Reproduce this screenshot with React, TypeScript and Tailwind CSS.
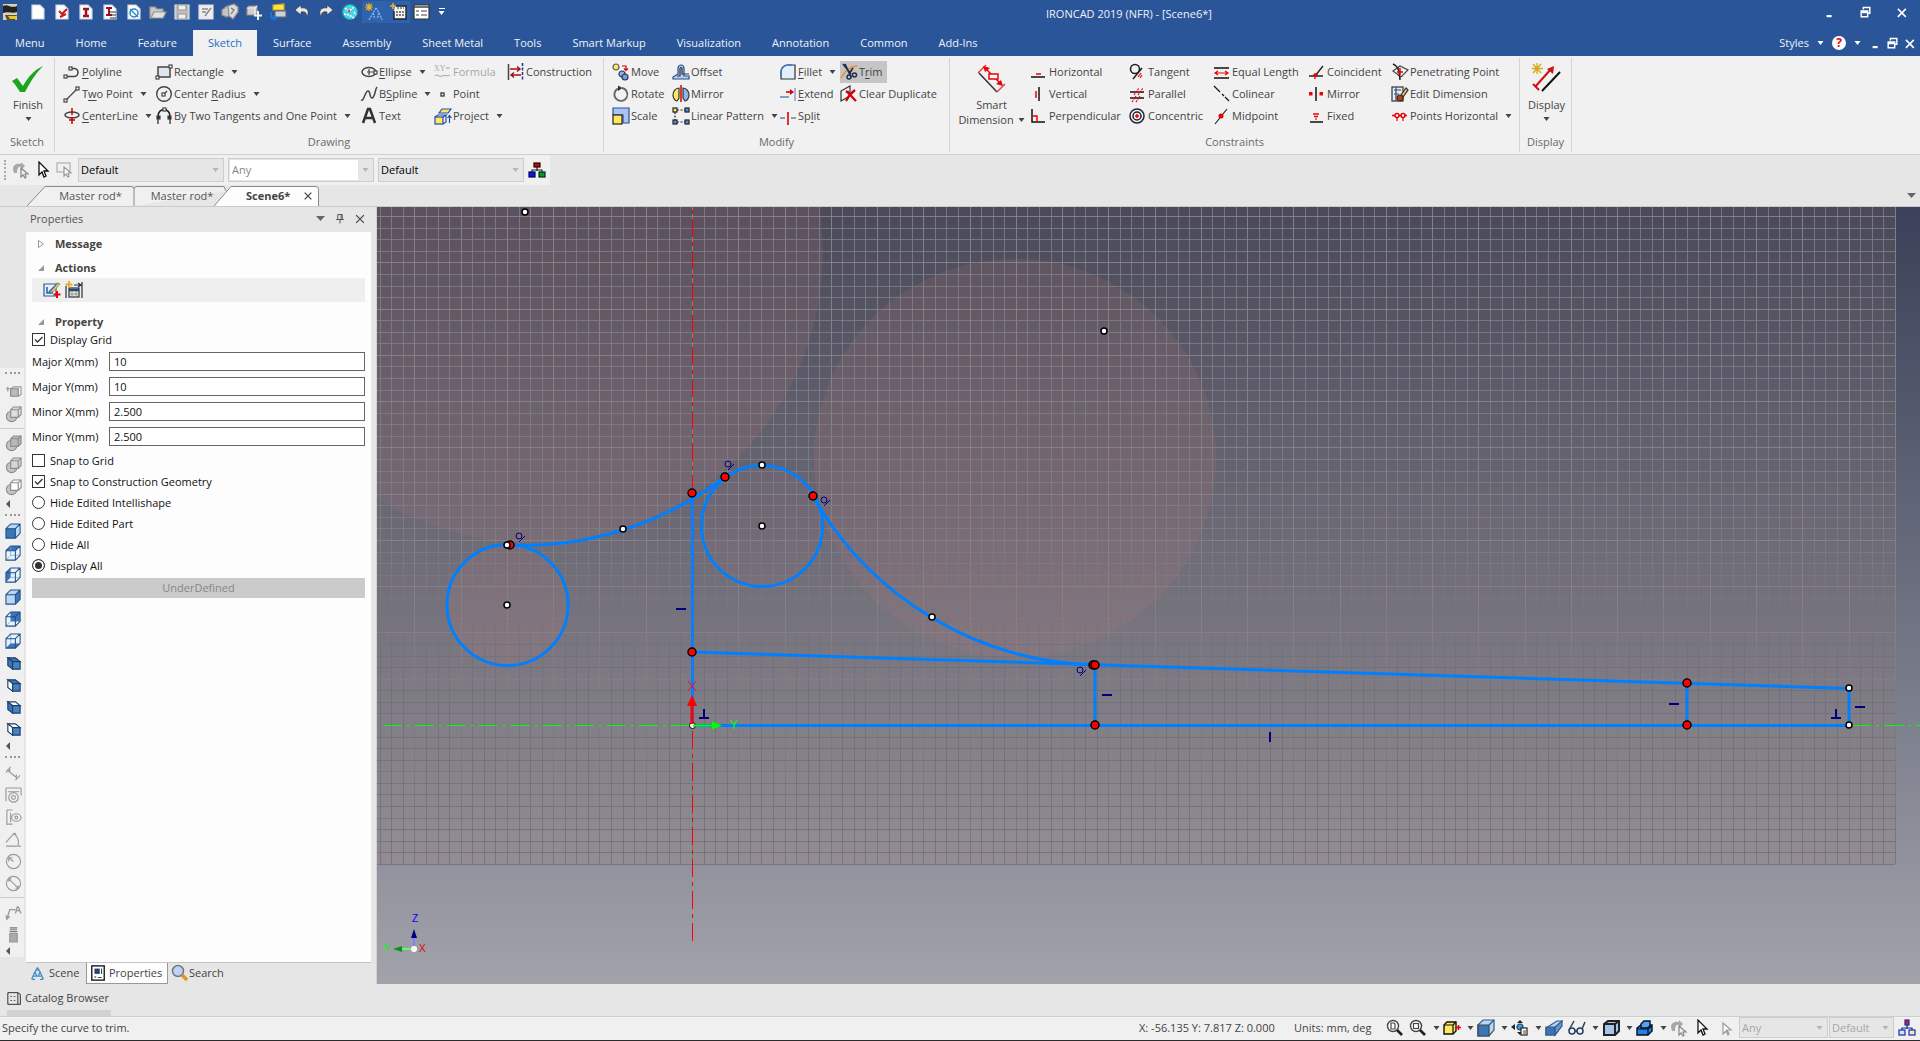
import { ReactNode, useState } from 'react';
import clsx from 'clsx';

const NAVY = '#00007f';
const BLUE = '#0080ff';
const RED = '#e00000';

type IconProps = { size?: number; children: ReactNode };

function Icon({ size = 18, children }: IconProps) {
  return (
    <svg width={size} height={size} viewBox="0 0 18 18" fill="none" stroke="#444" strokeWidth="1.2" className="shrink-0" aria-hidden="true">
      {children}
    </svg>
  );
}

function Caret({ className = 'text-[#444]' }: { className?: string }) {
  return (
    <svg width="7" height="4" viewBox="0 0 7 4" className={clsx('shrink-0', className)} aria-hidden="true">
      <path d="M0.500 0h6L3.500 4z" fill="currentColor" />
    </svg>
  );
}

// "&" marks the access key, as in a resource file
function Label({ text }: { text: string }) {
  const at = text.indexOf('&');
  if (at < 0) return <>{text}</>;
  return (
    <>
      {text.slice(0, at)}
      <span className="underline underline-offset-2">{text[at + 1]}</span>
      {text.slice(at + 2)}
    </>
  );
}

const icons: Record<string, ReactNode> = {
  polyline: <><path d="M4 13.500h7a4 4 0 0 0 0-8H8" strokeWidth="1.600" /><rect x="1" y="12" width="3" height="3" fill="#fff" /><rect x="6" y="4" width="3" height="3" fill="#fff" /></>,
  twoPoint: <><path d="M3 15L14 4" /><rect x="1" y="14" width="3" height="3" fill="#fff" /><rect x="13" y="2" width="3" height="3" fill="#fff" /></>,
  centerLine: <><ellipse cx="9" cy="8" rx="7" ry="3" strokeWidth="1.600" /><path d="M9 1v7M9 10v7M6 13h6" stroke="#c00" strokeWidth="1.500" /></>,
  rectangle: <><rect x="3" y="4" width="12" height="10" fill="#dfe6ef" strokeWidth="1.500" /><rect x="1" y="13" width="3" height="3" fill="#fff" /><rect x="14" y="2" width="3" height="3" fill="#fff" /></>,
  centerRadius: <><circle cx="9" cy="9" r="7.300" strokeWidth="1.400" /><path d="M8 10l4-4" /><rect x="7" y="8" width="3" height="3" fill="#fff" /></>,
  twoTangents: <><path d="M3 11V9a5.500 6 0 0 1 12 0v2" strokeWidth="1.500" stroke="#222" /><path d="M3 9v8M15 9v8" stroke="#222" /><rect x="2" y="9" width="3" height="3" fill="#222" /><rect x="13" y="9" width="3" height="3" fill="#222" /><rect x="8" y="1" width="3" height="3" fill="#fff" /></>,
  ellipse: <><ellipse cx="9" cy="9" rx="7" ry="4.500" strokeWidth="1.500" /><path d="M9 6v6M7 9h8" /><rect x="14" y="8" width="3" height="3" fill="#fff" /></>,
  bspline: <path d="M1 15c3 2 4-9 7-9s1 7 4 7 3-9 5-11" strokeWidth="1.500" />,
  text: <path d="M3 16L8 2h2l5 14M5 11h8" stroke="#333" strokeWidth="2.500" />,
  formula: <><text x="0" y="8" fontSize="8" fill="#aaa" stroke="none" fontFamily="Liberation Serif">XY=</text><path d="M1 13c3-3 4 2 7 0s4 1 8-1" stroke="#b5b5b5" /></>,
  point: <rect x="7" y="8" width="3" height="3" fill="#fff" strokeWidth="1.400" />,
  project: <><path d="M5 6l3-4h9l-3 4z" fill="#ffe860" stroke="#1f4fb0" /><rect x="1" y="10" width="8" height="7" fill="#ffe860" stroke="#1f4fb0" /><path d="M1 10l3-2h8l-3 2M12 8v7l-3 2" stroke="#1f4fb0" /><path d="M15.500 16V9M13.500 11l2-2.500 2 2.500" stroke="#1f4fb0" /></>,
  construction: <><path d="M1.500 1v16" strokeWidth="1.500" /><path d="M15.500 0v17" stroke="#2030a0" strokeDasharray="3 1.500" strokeWidth="1.500" /><path d="M3 6h10M10 3.500L13 6l-3 2.500M14 12H4M7 9.500L4 12l3 2.500" stroke="#a01010" strokeWidth="1.400" /></>,
  move: <><circle cx="4" cy="4" r="3" fill="#ffe860" stroke="#555" /><circle cx="10" cy="11" r="3" fill="#8fb4e8" stroke="#335" /><circle cx="13" cy="14" r="3" fill="#6f9de0" stroke="#335" /><path d="M10 3h4v4M12 5.500l2 2 2-2" stroke="#c00" /></>,
  rotate: <><path d="M10 3a6.500 6.500 0 1 1-4 .6" strokeWidth="1.800" stroke="#666" /><path d="M6 0.500l4.500 2.500L6 6z" fill="#333" stroke="none" /></>,
  scale: <><path d="M1 1h16v15H11V8H1z" fill="#a9c4f0" stroke="#2b50a8" /><rect x="1" y="8" width="9" height="9" fill="#ffe860" stroke="#222" /></>,
  offset: <><path d="M1 16h16v-3h-5V5a3 3 0 0 0-6 0v6L1 14z" fill="#b6cdec" stroke="#234f92" /><path d="M5 13h3V5.500a1 1 0 0 1 2 0V11h7" stroke="#333" /></>,
  mirror: <><path d="M7 3C3 3 1 7 1 10s2 6 4 6l2-3z" fill="#ffe860" stroke="#333" /><path d="M11 3c4 0 6 4 6 7s-2 6-4 6l-2-3z" fill="#8fb4e8" stroke="#333" /><path d="M9 0v17" stroke="#c00" strokeWidth="1.500" /></>,
  linearPattern: <><path d="M5 3h9M3 5v9M5 15h9" stroke="#222" strokeDasharray="2 1.500" /><rect x="1" y="1" width="4" height="4" fill="#ffe860" stroke="#222" /><rect x="13" y="1" width="4" height="4" fill="#5a8fd8" stroke="#222" /><rect x="1" y="13" width="4" height="4" fill="#5a8fd8" stroke="#222" /><rect x="13" y="13" width="4" height="4" fill="#5a8fd8" stroke="#222" /></>,
  fillet: <><path d="M16 2v14H2V9c0-4 3-7 7-7z" fill="#e4eefb" stroke="#333" /><path d="M2 13V9c0-4 3-7 7-7h4" stroke="#3f78c8" strokeWidth="1.500" /></>,
  extend: <><path d="M1 12h9" stroke="#5a86b8" strokeWidth="1.500" /><path d="M7 7h6" stroke="#d00" strokeWidth="1.600" /><path d="M11 4l4 3-4 3z" fill="#d00" stroke="none" /><path d="M16 3v13" stroke="#8a9be0" strokeWidth="1.500" /></>,
  split: <><path d="M1 11h5M12 11h5" stroke="#5a86b8" strokeWidth="1.500" /><path d="M9 5v13" stroke="#d00" strokeWidth="1.600" /></>,
  trim: <><path d="M1 15C5 8 10 3 17 3" stroke="#f08a28" strokeWidth="1.500" /><path d="M3 1l8 10M5 1l6 13M13 5l-4 6" stroke="#1f2e4a" strokeWidth="1.700" /><circle cx="9" cy="14" r="2" stroke="#1f2e4a" strokeWidth="1.500" /><circle cx="14.500" cy="12" r="2" stroke="#1f2e4a" strokeWidth="1.500" /></>,
  clearDup: <><path d="M1 6l9-5v10l-9 5zM8 6l2 5" stroke="#333" /><path d="M6 6c3 2 7 7 10 10M15 5c-4 3-7 7-9 11" stroke="#d40000" strokeWidth="2.200" /></>,
  horizontal: <><path d="M1 14h14" stroke="#111" strokeWidth="1.500" /><path d="M6 11h5" stroke="#e00" strokeWidth="1.500" /></>,
  vertical: <><path d="M9 2v14" stroke="#111" strokeWidth="1.500" /><path d="M6 6v7" stroke="#e00" strokeWidth="1.500" /></>,
  perpendicular: <><path d="M2 2v13h13" stroke="#111" strokeWidth="1.500" /><path d="M2 9h5v6" stroke="#e00" strokeWidth="1.500" /></>,
  tangent: <><circle cx="6" cy="6" r="4.500" stroke="#222" strokeWidth="1.600" /><path d="M4 16L13 5" stroke="#222" strokeWidth="1.500" /><path d="M9 14l3-4M11 15l2-3" stroke="#e00" /></>,
  parallel: <><path d="M1 7h14M1 13h14" stroke="#111" strokeWidth="1.500" /><path d="M5 10l5-7M9 10l5-7M3 17l4-6M7 17l4-6" stroke="#e00" strokeDasharray="2 1" /></>,
  concentric: <><circle cx="8" cy="9" r="7" stroke="#223" strokeWidth="1.500" /><circle cx="8" cy="9" r="4" stroke="#223" strokeWidth="1.500" /><path d="M8 7v4M6 9h4" stroke="#e00" strokeWidth="1.500" /></>,
  equalLength: <><path d="M1 5h15M1 15h15" stroke="#111" strokeWidth="1.500" /><path d="M2 10h13M5 8l-3 2 3 2M12 8l3 2-3 2" stroke="#e00" /></>,
  colinear: <path d="M1 1l6 6M9 9l2 2M12 12l4 4" stroke="#111" strokeWidth="1.200" />,
  midpoint: <><path d="M2 17L14 2" stroke="#222" /><circle cx="8" cy="9" r="2.500" fill="#e00" stroke="none" /></>,
  coincident: <><path d="M1 13h14M7 13l8-10" stroke="#222" strokeWidth="1.400" /><path d="M7 10v6M5 12h5" stroke="#e00" strokeWidth="1.400" /></>,
  mirrorC: <><path d="M8 2v14" stroke="#111" strokeWidth="1.500" /><rect x="1" y="7" width="3.500" height="3.500" fill="#e00" stroke="none" /><rect x="11.500" y="7" width="3.500" height="3.500" fill="#e00" stroke="none" /></>,
  fixed: <><path d="M2 15h13" stroke="#111" strokeWidth="1.500" /><path d="M5 7h6M6 9.500h4M7.300 12h1.500" stroke="#e00" strokeWidth="1.400" /></>,
  penetrating: <><path d="M2 8l7-5 8 4-7 7z" stroke="#444" /><path d="M2 1c5 2 6 5 7 16" stroke="#222" strokeWidth="1.500" /><path d="M9 5v7M6 9h6" stroke="#e00" strokeWidth="1.500" /></>,
  editDim: <><rect x="1" y="2" width="11" height="14" fill="#e7edf2" stroke="#333" /><path d="M5 2v14M3 5h7M3 9h5" stroke="#2b4d77" /><path d="M10 10l5-7 2 2-5 7z" fill="#eec27a" stroke="#333" /><circle cx="9" cy="13" r="3" fill="#a8481c" stroke="#522" /></>,
  pointsHorizontal: <><path d="M1 8.500h15" stroke="#d00" strokeWidth="1.500" /><circle cx="6" cy="8.500" r="2" fill="#fff" stroke="#d00" strokeWidth="1.400" /><circle cx="12" cy="8.500" r="2" fill="#fff" stroke="#d00" strokeWidth="1.400" /><path d="M6 11v3M12 11v3" stroke="#d00" /></>,
};

type Cmd = { icon: string; label: string; menu?: boolean; disabled?: boolean; active?: boolean };

function Command({ icon, label, menu, disabled, active }: Cmd) {
  return (
    <button
      disabled={disabled}
      className={clsx(
        'flex h-[22px] items-center gap-px whitespace-nowrap pr-1',
        active && 'bg-[#c5c5c5]',
        disabled ? 'text-[#a8a8a8]' : 'text-[#444]',
      )}
    >
      <Icon>{icons[icon]}</Icon>
      <span><Label text={label} /></span>
      {menu && <span className="pl-1.5"><Caret /></span>}
    </button>
  );
}

function Group({ title, className, children }: { title: string; className: string; children: ReactNode }) {
  return (
    <section className={clsx('my-0.5 flex shrink-0 flex-col border-r border-[#d4d4d4]', className)}>
      <div className="flex h-[74px] items-start pt-[3px]">{children}</div>
      <h2 className="text-center leading-5 text-[#6a6a6a]">{title}</h2>
    </section>
  );
}

const drawing: Cmd[][] = [
  [{ icon: 'polyline', label: '&Polyline' }, { icon: 'twoPoint', label: 'T&wo Point', menu: true }, { icon: 'centerLine', label: '&CenterLine', menu: true }],
  [{ icon: 'rectangle', label: 'Rectangle', menu: true }, { icon: 'centerRadius', label: 'Center &Radius', menu: true }, { icon: 'twoTangents', label: 'By Two Tangents and One Point', menu: true }],
  [{ icon: 'ellipse', label: '&Ellipse', menu: true }, { icon: 'bspline', label: 'B&Spline', menu: true }, { icon: 'text', label: 'Text' }],
  [{ icon: 'formula', label: 'Formula', disabled: true }, { icon: 'point', label: 'Point' }, { icon: 'project', label: 'Project', menu: true }],
  [{ icon: 'construction', label: 'Construction' }],
];

const modify: Cmd[][] = [
  [{ icon: 'move', label: 'Move' }, { icon: 'rotate', label: 'Rotate' }, { icon: 'scale', label: 'Scale' }],
  [{ icon: 'offset', label: 'Offset' }, { icon: 'mirror', label: 'Mirror' }, { icon: 'linearPattern', label: 'Linear Pattern', menu: true }],
  [{ icon: 'fillet', label: '&Fillet', menu: true }, { icon: 'extend', label: '&Extend' }, { icon: 'split', label: 'Sp&lit' }],
  [{ icon: 'trim', label: 'T&rim', active: true }, { icon: 'clearDup', label: 'Clear Duplicate' }],
];

const constraints: Cmd[][] = [
  [{ icon: 'horizontal', label: 'Horizontal' }, { icon: 'vertical', label: 'Vertical' }, { icon: 'perpendicular', label: 'Perpendicular' }],
  [{ icon: 'tangent', label: 'Tangent' }, { icon: 'parallel', label: 'Parallel' }, { icon: 'concentric', label: 'Concentric' }],
  [{ icon: 'equalLength', label: 'Equal Length' }, { icon: 'colinear', label: 'Colinear' }, { icon: 'midpoint', label: 'Midpoint' }],
  [{ icon: 'coincident', label: 'Coincident' }, { icon: 'mirrorC', label: 'Mirror' }, { icon: 'fixed', label: 'Fixed' }],
  [{ icon: 'penetrating', label: 'Penetrating Point' }, { icon: 'editDim', label: 'Edit Dimension' }, { icon: 'pointsHorizontal', label: 'Points Horizontal', menu: true }],
];

function Columns({ cols, className }: { cols: Cmd[][]; className: string }) {
  return (
    <div className={clsx('grid', className)}>
      {cols.map((col, i) => (
        <div key={i} className="flex flex-col items-start">
          {col.map((c) => <Command key={c.label} {...c} />)}
        </div>
      ))}
    </div>
  );
}

const sheet = <path d="M3 2h8l4 4v10H3z" fill="#fff" stroke="#cfd6e4" />;

const quickAccess: ReactNode[] = [
  sheet,
  <>{sheet}<path d="M6 8l3 3 5-5M7 14l6-3" stroke="#d01818" strokeWidth="2" /></>,
  <>{sheet}<path d="M6 6h6M6 13h6M9 6v7" stroke="#a01020" strokeWidth="2.500" /></>,
  <>{sheet}<path d="M5 5h6M5 12h6M8 5v7" stroke="#a01020" strokeWidth="2" /><path d="M9 9h6M9 12h6M9 15h6" stroke="#333" /></>,
  <>{sheet}<circle cx="9" cy="10" r="4" stroke="#1e88c8" strokeWidth="1.500" /><path d="M5 6l8 8" stroke="#1e88c8" /></>,
  <><path d="M1 4h5l2 2h6v3H5l-3 6H1z" fill="#c9c9c9" stroke="#999" /><path d="M5 9h12l-3 6H2z" fill="#e2e2e2" stroke="#999" /></>,
  <><path d="M2 2h14v14H2z" fill="#bdbdbd" stroke="#ddd" /><path d="M5 2h8v5H5zM5 11h8v5H5z" fill="#eee" stroke="#999" /></>,
  <><path d="M2 2h14v14H2z" fill="#ededed" stroke="#ddd" /><path d="M5 6h6M5 9h4M8 13l6-8" stroke="#888" strokeWidth="1.500" /></>,
  <><path d="M1 7l5-4 4 2v6l-4 3-5-2z" fill="#c4c4c4" stroke="#8e8e8e" /><path d="M7 3l6-2 4 3v5l-5 7-4-3z" fill="#dadada" stroke="#8e8e8e" /><path d="M10 5l3 2-3 4" stroke="#777" /></>,
  <><path d="M2 5l2-2h8v7l-2 2H2z" fill="#cfcfcf" stroke="#8e8e8e" /><path d="M2 5h8v7M10 5l2-2" stroke="#eee" /><path d="M13 8v9M9 12.500h8" stroke="#f4f4f4" strokeWidth="2" /></>,
  <><path d="M4 2l11-1v6H4z" fill="#ffe14a" stroke="#c8a818" /><path d="M6 8h11v6H6z" fill="#c8d3e0" stroke="#667" /><path d="M2 9v6h4M4 13l3 2-3 2" stroke="#1a72d8" strokeWidth="2" /></>,
  <path d="M8 2L2 7l6 5V9c4-1 6 1 6 5 3-6 0-10-6-9z" fill="#e8e8e8" stroke="#333" strokeWidth=".6" />,
  <path d="M10 2l6 5-6 5V9C6 8 4 10 4 14c-3-6 0-10 6-9z" fill="#e8e8e8" stroke="#333" strokeWidth=".6" />,
  <><circle cx="9" cy="9" r="7.500" fill="#48d4e4" stroke="#1e98b0" /><path d="M4 5l4 3 5-4M3 11l5 1 5 3M13 9l2 3" stroke="#fff" strokeWidth="1.500" strokeDasharray="2 1" /><circle cx="8" cy="8" r="1.200" fill="#e04040" stroke="none" /></>,
  <><path d="M4 0v8M0 4h8M1 1l6 6M7 1L1 7" stroke="#f0b429" /><path d="M11 5l3 5M11 5l-3 5M8 10l-4 7M14 10l3 7M8 10l2 6M14 10l-2 6" stroke="#77b0e8" strokeWidth="1.500" strokeDasharray="2 1" /></>,
  <><path d="M6 3h11v13H5V8" fill="#f4f4f4" stroke="#222" strokeWidth="1.400" /><path d="M8 8v6M11 8v6M14 8v6M8 5h7" stroke="#333" strokeDasharray="2 1" /><path d="M4 0v6M1 3h6" stroke="#f0b429" strokeWidth="1.500" /></>,
  <><path d="M1 2h15v14H1z" fill="#fff" stroke="#333" /><path d="M1 4h15" strokeWidth="1.500" /><path d="M3 8h3M3 12h3M8 8h6M8 12h6" strokeWidth="1.200" /></>,
];

function WindowButtons() {
  return (
    <>
      <button aria-label="Minimize"><Icon size={13}><path d="M5 14h7" stroke="#fff" strokeWidth="3" /></Icon></button>
      <button aria-label="Restore"><Icon size={13}><path d="M6 5V2h9v8h-3M3 7h9v8H3zM3 9h9" stroke="#fff" strokeWidth="2" /></Icon></button>
      <button aria-label="Close"><Icon size={13}><path d="M4 4l11 11M15 4L4 15" stroke="#fff" strokeWidth="2.200" /></Icon></button>
    </>
  );
}

const ribbonTabs = ['Menu', 'Home', 'Feature', 'Sketch', 'Surface', 'Assembly', 'Sheet Metal', 'Tools', 'Smart Markup', 'Visualization', 'Annotation', 'Common', 'Add-Ins'];

function TitleBar() {
  return (
    <header className="bg-[#2a5699] text-white">
      <div className="relative flex h-[30px] items-start justify-between">
        <div className="flex h-[23px] items-center">
          <button aria-label="IRONCAD" className="mr-1.5 pl-0.5">
            <Icon>
              <rect x="1" y="1" width="14" height="16" fill="#d9d2b4" stroke="none" />
              <path d="M1 3c5-3 7 3 14 0v6c-4 2-9-1-14 1z" fill="#222" stroke="none" />
              <path d="M3 12h12l-2 5H5z" fill="#5a5030" stroke="none" />
              <path d="M6 13h9v3H8z" fill="#e8c628" stroke="none" />
            </Icon>
          </button>
          {quickAccess.map((q, i) => (
            <button key={i} aria-label={`Quick access ${i + 1}`} className={clsx('flex w-6 justify-center py-0.5', (i === 14 || i === 15) && 'bg-[#2f62ad]')}>
              <Icon>{q}</Icon>
            </button>
          ))}
          <button aria-label="Customize toolbar" className="ml-1 flex flex-col items-center gap-0.5">
            <span className="h-px w-1.5 bg-white" />
            <Caret className="text-white" />
          </button>
        </div>
        <h1 className="absolute left-[1046px] top-1 leading-5 text-[#eef2f9]">IRONCAD 2019 (NFR) - [Scene6*]</h1>
        <div className="flex h-6 items-center gap-[23px] pr-3"><WindowButtons /></div>
      </div>
      <div className="flex h-[26px] items-stretch justify-between">
        <nav className="flex gap-px">
          {ribbonTabs.map((t) => (
            <button key={t} className={clsx('px-[15px]', t === 'Sketch' ? 'bg-[#f1f1f1] text-[#1e6fc4]' : 'text-[#eef2f9]')}>{t}</button>
          ))}
        </nav>
        <div className="flex items-center gap-2 pr-1">
          <button className="flex items-center gap-2 text-[#eef2f9]">Styles <Caret className="text-white" /></button>
          <button aria-label="Help" className="flex items-center gap-2">
            <span className="flex h-3.5 w-3.5 items-center justify-center rounded-full bg-white text-xs font-bold text-red-600">?</span>
            <Caret className="text-white" />
          </button>
          <div className="flex items-center gap-1"><WindowButtons /></div>
        </div>
      </div>
    </header>
  );
}

function Ribbon() {
  return (
    <div className="flex h-[99px] overflow-hidden border-b border-[#cfcfcf] bg-[#f1f1f1]">
      <Group title="Sketch" className="w-[55px]">
        <button className="flex w-full flex-col items-center pl-0.5 text-[#444]">
          <svg width="34" height="32" viewBox="0 -3 34 32" aria-hidden="true"><path d="M1 17l5-3 6 8C17 13 23 6 32 2 24 10 18 20 14 28h-5C7 25 5 21 1 17z" fill="#1ea51e" /></svg>
          <span className="pt-1 leading-4">Finish</span>
          <span className="pt-1"><Caret /></span>
        </button>
      </Group>
      <Group title="Drawing" className="w-[549px]">
        <Columns cols={drawing} className="grid-cols-[92px_205px_74px_73px_95px] pl-2" />
      </Group>
      <Group title="Modify" className="w-[346px]">
        <Columns cols={modify} className="grid-cols-[60px_107px_61px_106px] pl-2" />
      </Group>
      <Group title="Constraints" className="w-[570px]">
        <button className="flex w-20 flex-col items-center pl-[3px] text-[#444]">
          <svg width="36" height="32" viewBox="-1 -3 36 32" fill="none" aria-hidden="true">
            <path d="M4 9l18 19" stroke="#333" strokeWidth="1.500" />
            <path d="M3 9l8-8M22 28l8-8" stroke="#e04848" strokeWidth="1.500" />
            <path d="M9 3l18 18" stroke="#e00" strokeWidth="1.500" />
            <path d="M8 2l7 2-5 4zM28 22l-7-2 5-4z" fill="#e00" />
            <rect x="14" y="10" width="9" height="5" fill="#fff" stroke="#e00" strokeWidth="1.500" />
          </svg>
          <span className="whitespace-nowrap pt-1 leading-[15px]">Smart</span>
          <span className="flex items-center gap-1 leading-[15px]">Dimension <Caret /></span>
        </button>
        <Columns cols={constraints} className="grid-cols-[99px_84px_95px_83px_125px]" />
      </Group>
      <Group title="Display" className="w-[52px]">
        <button className="flex w-full flex-col items-center pl-0.5 text-[#444]">
          <svg width="34" height="32" viewBox="-1 -2 34 32" fill="none" aria-hidden="true">
            <path d="M6 0v11M1 5.500h11M2 1l8 9M10 1l-8 9" stroke="#d4a818" strokeWidth="1.300" />
            <path d="M4 24L20 6M2 21l6 6" stroke="#d01010" strokeWidth="2" />
            <path d="M23 3l-1 8-6-5z" fill="#d01010" />
            <path d="M11 28L29 9" stroke="#111" strokeWidth="2" />
          </svg>
          <span className="pt-1 leading-4">Display</span>
          <span className="pt-1"><Caret /></span>
        </button>
      </Group>
    </div>
  );
}

function Picker({ label, value, className, disabled }: { label: string; value: string; className: string; disabled?: boolean }) {
  return (
    <div className={clsx('relative flex items-center border border-[#cdcdcd] bg-[#e6e6e6]', className)}>
      <select aria-label={label} disabled={disabled} className={clsx('h-full w-full appearance-none px-0.5', disabled ? 'text-[#a6a6a6]' : 'text-black')}>
        <option>{value}</option>
      </select>
      <span className="pointer-events-none absolute right-1"><Caret className="text-[#b4b4b4]" /></span>
    </div>
  );
}

const cursor = <path d="M5 1v13l3-3 2 5 2-1-2-5h4z" fill="#fff" stroke="#111" strokeWidth="1.300" />;
const bentArrow = <><path d="M1 8c0-5 5-6 8-5V1l4 4-4 4V6C6 5 5 8 5 12H2z" fill="#a8a8a8" stroke="none" /><path d="M9 7v9l2-2 2 3 1-1-1-3h3z" fill="#eee" stroke="#888" /></>;
const boxCursor = <><rect x="1" y="2" width="13" height="9" stroke="#b0b0b0" /><path d="M8 6v9l2-2 2 3 1-1-1-3h3z" fill="#fff" stroke="#999" /></>;
const tree = <><path d="M9 6v4M4 12V9h10v3" stroke="#222" /><rect x="6" y="2" width="6" height="4" fill="#b01010" stroke="#300" /><rect x="1" y="11" width="6" height="5" fill="#1018d8" stroke="#006" /><rect x="11" y="11" width="6" height="5" fill="#109030" stroke="#030" /></>;
const paleTree = <><path d="M9 6v4M4 12V9h10v3" stroke="#14307a" /><rect x="7" y="1" width="4" height="5" fill="#d02020" stroke="#1a2ab0" /><rect x="1" y="11" width="6" height="5" fill="#cfe2ff" stroke="#1a2ab0" /><rect x="11" y="11" width="6" height="5" fill="#f4ecb8" stroke="#1a2ab0" /></>;

function SelectionBar() {
  return (
    <div className="flex h-[30px] w-[550px] items-center bg-[#f0f0f0] pl-1">
      <span className="h-5 w-2 border-l-2 border-dotted border-[#aaa]" />
      <button aria-label="Back"><Icon>{bentArrow}</Icon></button>
      <button aria-label="Select" className="pl-1"><Icon>{cursor}</Icon></button>
      <button aria-label="Box select" className="px-1"><Icon>{boxCursor}</Icon></button>
      <Picker label="Selection mode" value="Default" className="h-6 w-[146px]" />
      <div className="relative ml-1 flex h-6 w-[146px] items-center border border-[#cdcdcd] bg-[#e6e6e6] pl-px">
        <select aria-label="Filter" className="h-5 w-[128px] appearance-none bg-white px-0.5 text-[#888]"><option>Any</option></select>
        <span className="pointer-events-none absolute right-1"><Caret className="text-[#b4b4b4]" /></span>
      </div>
      <Picker label="Configuration" value="Default" className="ml-1 h-6 w-[146px]" />
      <button aria-label="Structure" className="pl-1"><Icon>{tree}</Icon></button>
    </div>
  );
}

function DocTabs() {
  return (
    <div className="flex h-[22px] items-end justify-between border-b border-[#cacaca]">
      <div className="flex h-5 pl-[27px]">
        <button className="relative h-5 w-[107px] pl-5 text-[#555]">
          <svg viewBox="0 0 107 20" className="absolute left-0 top-0 h-5 w-[107px]" fill="#f0f0f0" stroke="#8a8a8a" aria-hidden="true">
            <path d="M0 20L18 0.500H104q3 0 3 3V20" />
          </svg>
          <span className="relative leading-5">Master rod*</span>
        </button>
        <button className="relative h-5 w-[80px] pl-4 text-[#555]">
          <svg viewBox="0 0 107 20" className="absolute left-0 top-0 h-5 w-[107px]" fill="#f0f0f0" stroke="#8a8a8a" aria-hidden="true">
            <path d="M0 20V3q0-2.500 3-2.500H90L92 5" />
          </svg>
          <span className="relative whitespace-nowrap leading-5">Master rod*</span>
        </button>
        <div className="relative flex h-5 w-[105px] items-center justify-between pl-7 pr-1.5">
          <svg viewBox="0 0 105 20" className="absolute left-0 top-0 h-5 w-[105px]" fill="#fdfdfd" stroke="#8a8a8a" aria-hidden="true">
            <path d="M0 20L17 0.500H102q2.500 0 2.500 3V20" />
          </svg>
          <button className="relative pl-1 font-bold text-[#444]">Scene6*</button>
          <button aria-label="Close tab" className="relative"><Icon size={10}><path d="M3 3l12 12M15 3L3 15" strokeWidth="2.200" /></Icon></button>
        </div>
      </div>
      <button aria-label="Tab list" className="pb-2 pr-1"><svg width="9" height="5" aria-hidden="true"><path d="M0 0h9L4.500 5z" fill="#666" /></svg></button>
    </div>
  );
}

// Cube with one face picked out, seen from the right
function FaceCube({ face }: { face: string }) {
  const f: Record<string, string> = {
    front: 'M1 6h10v10H1z', top: 'M1 6l5-5h10l-5 5z', left: 'M1 6l5-5v10l-5 5z',
    right: 'M11 6l5-5v10l-5 5z', back: 'M6 1h10v10H6z', bottom: 'M1 16l5-5h10l-5 5z',
  };
  return (
    <Icon size={17}>
      <path d="M1 6l5-5h10v10l-5 5H1z" fill={face === 'front' || face === 'right' ? '#b9d6f3' : '#e9f3fd'} stroke="none" />
      <path d={f[face]} fill="#3a75b5" stroke="none" />
      {face !== 'front' && face !== 'right' && <path d="M6 1v10h10M6 11l-5 5" stroke="#7ea9d4" strokeWidth=".8" />}
      <path d="M1 6l5-5h10v10l-5 5H1zM1 6h10v10M11 6l5-5" stroke="#21508a" strokeWidth="1.100" />
    </Icon>
  );
}

// Smaller cube seen from the left, used for the isometric views
function IsoCube({ top, left }: { top: boolean; left: boolean }) {
  return (
    <Icon size={17}>
      <g stroke="#1d3c66" strokeWidth="1.200">
        <path d="M3 3h8l5 4H8z" fill={top ? '#3b76b8' : '#fff'} />
        <path d="M3 3l5 4v8l-5-4z" fill={left ? '#3b76b8' : '#fff'} />
        <path d="M8 7h8v8H8z" fill="#4383c4" />
      </g>
    </Icon>
  );
}

function GreySolid({ inner }: { inner: string }) {
  return (
    <Icon size={17}>
      <circle cx="7" cy="11" r="5.500" fill="#c4c4c4" stroke="#8c8c8c" />
      <path d="M6 4l3-3h8v8l-3 3H6z" fill={inner} stroke="#8c8c8c" />
      <path d="M6 4h8v8M14 4l3-3" stroke="#8c8c8c" />
    </Icon>
  );
}

const dims: ReactNode[] = [
  <path d="M2 5l11 9M1 8l5-6M11 16l5-5M5 4v4M12 10v4" />,
  <><path d="M1 1h16M1 1v14M17 1v8M3 5h12" /><circle cx="9" cy="11" r="5" /><circle cx="9" cy="11" r="2" /></>,
  <><path d="M2 1v16M2 1h6M2 16h6M6 4v10" /><ellipse cx="12" cy="9" rx="5" ry="4" /><circle cx="12" cy="9" r="1.500" /></>,
  <path d="M1 12L10 2M1 16h16M10 3c4 4 5 8 4 12M8 4l3-1 1 3" />,
  <><circle cx="9" cy="9" r="7.500" /><path d="M4 5l5 4M4 9V5h4" /></>,
  <><circle cx="9" cy="9" r="7.500" /><path d="M4 4l10 10M4 7V4h3M11 14h3v-3" /></>,
];

function Grip() {
  return <span className="my-1 h-px w-[15px] border-t-2 border-dotted border-[#9a9a9a]" />;
}

function Flyout() {
  return <svg width="4" height="8" className="my-0.5 mr-2" aria-hidden="true"><path d="M4 0v8L0 4z" fill="#555" /></svg>;
}

function SideButton({ label, children }: { label: string; children: ReactNode }) {
  return <button aria-label={label} className="flex h-[22px] w-full items-center justify-center pl-0.5">{children}</button>;
}

function SideToolbar() {
  return (
    <aside className="flex w-[26px] flex-col pt-[161px]">
      <div className="flex w-6 flex-col items-center bg-[#f0f0f0]">
        <Grip />
        <span className="h-[3px]" />
        <SideButton label="Insert block"><Icon size={17}><path d="M6 5h8v8H6z" fill="#bbb" stroke="#888" /><path d="M6 5l3-2h8v8l-3 2M1 5h5M3 3v5" stroke="#999" /></Icon></SideButton>
        <SideButton label="Intersect solids"><GreySolid inner="#dedede" /></SideButton>
        <span className="my-[3px] h-px w-full bg-[#ccc]" />
        <SideButton label="Unite"><GreySolid inner="#b8b8b8" /></SideButton>
        <SideButton label="Subtract"><GreySolid inner="#d6d6d6" /></SideButton>
        <SideButton label="Split solid"><GreySolid inner="#fff" /></SideButton>
        <Flyout />
        <Grip />
        {['front', 'top', 'left', 'right', 'back', 'bottom'].map((f) => (
          <SideButton key={f} label={`View ${f}`}><FaceCube face={f} /></SideButton>
        ))}
        {[[true, true], [true, false], [false, true], [false, false]].map(([t, l], i) => (
          <SideButton key={i} label={`Isometric ${i + 1}`}><IsoCube top={t} left={l} /></SideButton>
        ))}
        <Flyout />
        <Grip />
        {dims.map((d, i) => (
          <SideButton key={i} label={`Dimension ${i + 1}`}><Icon size={17}><g stroke="#9a9a9a">{d}</g></Icon></SideButton>
        ))}
        <span className="my-[3px] h-px w-full bg-[#ccc]" />
        <SideButton label="Leader"><Icon size={17}><path d="M2 16L5 6h6M1 12l1 4 3-3M11 10l2-7h1l3 7M12 7h4" stroke="#999" strokeWidth="1.400" /></Icon></SideButton>
        <SideButton label="Thread"><Icon size={17}><path d="M5 2h8M5 4h8M5 6h8" stroke="#777" /><path d="M5 8h8v9H5z" fill="#aaa" stroke="#999" /></Icon></SideButton>
        <Flyout />
      </div>
    </aside>
  );
}

function Heading({ text, open }: { text: string; open?: boolean }) {
  return (
    <h3 className="flex h-6 items-center pl-[5px] font-bold text-[#444]">
      <svg width="8" height="8" aria-hidden="true" className="mr-2.5">
        {open ? <path d="M7 1v6H1z" fill="#999" /> : <path d="M1.500 0.500v7l5-3.500z" fill="none" stroke="#999" />}
      </svg>
      {text}
    </h3>
  );
}

function Check({ label, initial }: { label: string; initial: boolean }) {
  const [on, setOn] = useState(initial);
  return (
    <label className="flex h-[21px] items-center gap-[5px]">
      <span className="relative flex">
        <input type="checkbox" checked={on} onChange={() => setOn(!on)} className="h-[13px] w-[13px] appearance-none border border-[#333] bg-white" />
        {on && <svg viewBox="0 0 13 13" className="pointer-events-none absolute h-[13px] w-[13px]" fill="none" aria-hidden="true"><path d="M3 6.500l2.500 2.500L10.500 4" stroke="#333" strokeWidth="1.300" /></svg>}
      </span>
      {label}
    </label>
  );
}

const displayModes = ['Hide Edited Intellishape', 'Hide Edited Part', 'Hide All', 'Display All'];

function PropertiesPanel() {
  const [mode, setMode] = useState('Display All');
  const [grid, setGrid] = useState<Record<string, string>>({ 'Major X(mm)': '10', 'Major Y(mm)': '10', 'Minor X(mm)': '2.500', 'Minor Y(mm)': '2.500' });

  return (
    <section className="flex w-[345px] flex-col">
      <div className="flex h-[25px] items-center justify-between pb-0.5 pl-1 pr-1.5 text-[#555]">
        <h2>Properties</h2>
        <div className="flex items-center gap-2.5">
          <button aria-label="Panel menu"><svg width="9" height="5" aria-hidden="true"><path d="M0 0h9L4.500 5z" fill="#666" /></svg></button>
          <button aria-label="Pin"><Icon size={10}><path d="M5 1h8v9M5 1v9M2 10h14M9 10v7M11 1v9" strokeWidth="1.800" stroke="#555" /></Icon></button>
          <button aria-label="Close panel"><Icon size={10}><path d="M2 2l14 14M16 2L2 16" strokeWidth="2.200" /></Icon></button>
        </div>
      </div>
      <div className="flex-1 bg-[#fdfdfd] px-1.5 text-[#111]">
        <Heading text="Message" />
        <Heading text="Actions" open />
        <div className="-mt-0.5 mb-2 flex h-6 items-center gap-1 bg-[#efefef] pl-[11px]">
          <button aria-label="Edit sketch">
            <Icon><path d="M1 3h12v12H1z" fill="#e6f0fa" stroke="#2a5a9a" /><path d="M4 6v6h6M6 11l9-9" stroke="#2a5a9a" strokeWidth="1.500" /><path d="M8 10l7-8 2 1-7 8z" fill="#f0c860" stroke="#775" strokeWidth=".7" /><path d="M14 10v7M10.500 13.500h7" stroke="#e00" strokeWidth="2" /></Icon>
          </button>
          <button aria-label="Dimension table">
            <Icon><path d="M1 5v12M17 1v16M9 4h7M13 2l3 2-3 2" stroke="#234" /><rect x="4" y="7" width="10" height="9" fill="#e8e6cc" stroke="#234" /><path d="M4 9h10" stroke="#234a78" strokeWidth="2.500" /><path d="M7 10v6M11 10v6M4 13h10" stroke="#889" strokeWidth=".8" /><path d="M4 0v7M0.500 3.500h7" stroke="#eaa820" strokeWidth="1.800" /></Icon>
          </button>
        </div>
        <Heading text="Property" open />
        <div className="-mt-[5px]">
          <Check label="Display Grid" initial />
        </div>
        <div className="flex flex-col gap-1.5 py-0.5">
          {Object.keys(grid).map((k) => (
            <label key={k} className="flex h-[19px] items-center">
              <span className="w-[77px]">{k}</span>
              <input value={grid[k]} onChange={(e) => setGrid({ ...grid, [k]: e.target.value })} className="h-[19px] min-w-0 flex-1 border border-[#666] bg-white px-1" />
            </label>
          ))}
        </div>
        <div className="pt-0.5">
          <Check label="Snap to Grid" initial={false} />
          <Check label="Snap to Construction Geometry" initial />
          {displayModes.map((m) => (
            <label key={m} className="flex h-[21px] items-center gap-[5px]">
              <input
                type="radio"
                name="display"
                checked={mode === m}
                onChange={() => setMode(m)}
                className="h-[13px] w-[13px] appearance-none rounded-full border border-[#333] bg-white checked:bg-[#333] checked:shadow-[inset_0_0_0_2px_white]"
              />
              {m}
            </label>
          ))}
        </div>
        <button className="mt-0.5 h-5 w-full bg-[#cbcbcb] text-[#868686]">UnderDefined</button>
      </div>
      <div className="flex h-[22px] items-start border-t border-[#c4c4c4] text-[#444]">
        <button className="flex h-5 w-[60px] items-center gap-1 pl-1">
          <Icon size={15}><path d="M9 2l3 5M9 2L6 7M6 7l-4 9M12 7l4 9M6 7l2 5M12 7l-2 5M4 12h10M2 16h4M12 16h4M7 5h4" stroke="#3f90c4" strokeWidth="1.500" /></Icon>Scene
        </button>
        <button className="flex h-[21px] w-[82px] items-center gap-[3px] border border-t-0 border-[#999] bg-[#fdfdfd] pl-[3px]">
          <Icon size={16}><rect x="2" y="1" width="14" height="16" fill="#fff" stroke="#111" strokeWidth="1.500" /><rect x="5" y="4" width="6" height="6" fill="#28466e" stroke="none" /><path d="M13 4v6M5 13l2 1M9 14h4" stroke="#28466e" /></Icon>Properties
        </button>
        <button className="flex h-5 items-center pl-[3px]">
          <Icon><circle cx="7" cy="7" r="5.500" fill="#bcd4fa" stroke="#777" strokeWidth="1.500" /><path d="M11 11l5 5" stroke="#d8982a" strokeWidth="3.500" /></Icon>Search
        </button>
      </div>
    </section>
  );
}

// Sketch plane: origin and spacing of the construction grid
const OX = 692.5;
const OY = 725.5;
const PITCH = 46.26;
const snap = (v: number) => Math.round(v - 0.5) + 0.5;

const gridX = Array.from({ length: 132 }, (_, i) => i - 27).filter((i) => i <= 104);
const gridY = Array.from({ length: 57 }, (_, i) => 12 - i);

const constrained = [[692, 493], [725, 477], [813, 496], [510, 545], [692, 652], [1093, 665], [1095, 665], [1687, 683], [1095, 725], [1687, 725]];
const free = [[525, 212], [1104, 331], [762, 465], [762, 526], [623, 529], [507, 545], [507, 605], [932, 617], [1849, 688], [1849, 725]];
const tangents = [[729, 465], [825, 501], [520, 537], [1081, 671]];
const dashes = [[681, 609], [1107, 695], [1674, 704], [1860, 707]];

function SketchCanvas() {
  return (
    <main className="min-w-0 flex-1 overflow-hidden bg-linear-to-b from-[#3a4158] to-[#a2a2aa]">
      <svg viewBox="377 207 1543 777" preserveAspectRatio="xMinYMin slice" className="h-full w-full" fill="none" aria-label="Sketch">
        <defs>
          <linearGradient id="minor" gradientUnits="userSpaceOnUse" x1="0" y1="207" x2="0" y2="864">
            <stop offset="0" stopColor="#7e828c" />
            <stop offset="0.5" stopColor="#7b8087" />
            <stop offset="0.7" stopColor="#6d7079" />
            <stop offset="1" stopColor="#6d7079" />
          </linearGradient>
          <linearGradient id="major" gradientUnits="userSpaceOnUse" x1="0" y1="207" x2="0" y2="864">
            <stop offset="0" stopColor="#8f8d8d" />
            <stop offset="0.6" stopColor="#86868a" />
            <stop offset="1" stopColor="#6d7079" />
          </linearGradient>
        </defs>

        <rect x="377" y="207" width="1518" height="657" fill="#9f7664" fillOpacity=".17" />
        <g fill="#c4787a" fillOpacity=".15">
          <circle cx="532" cy="252" r="291" />
          <ellipse cx="1015" cy="458" rx="201" ry="199" />
          <circle cx="507" cy="605" r="60" />
          <circle cx="762" cy="526" r="60" fillOpacity=".08" />
        </g>

        <g strokeWidth="1" strokeOpacity=".8">
          {gridX.map((i) => <path key={i} d={`M${snap(OX + (i * PITCH) / 4)} 207V864`} stroke={i % 4 ? 'url(#minor)' : 'url(#major)'} />)}
          {gridY.map((i) => {
            const y = snap(OY + (i * PITCH) / 4);
            return y > 207 && <rect key={i} x="377" y={y - 0.5} width="1518" height="1" fill={i % 4 ? 'url(#minor)' : 'url(#major)'} fillOpacity=".8" stroke="none" />;
          })}
        </g>

        <path d="M692.500 207V941" stroke="#f00" strokeDasharray="18 5 4 5" strokeDashoffset="20" />
        <path d="M383 725.500H692M1852 725.500H1920" stroke="#0f0" strokeDasharray="19 5 3 5" />

        <g stroke={BLUE} strokeWidth="3">
          <circle cx="507.500" cy="605" r="60.500" />
          <circle cx="762" cy="526" r="60.500" />
          <path d="M510 545A333 333 0 0 0 725 477" />
          <path d="M813 496A334 334 0 0 0 1094 665" />
          <path d="M692.500 652L1849 688.500M692.500 725.500H1849M1095 665V725M1687 684V725M1849 688V725M692.500 493V725" />
        </g>
        <path d="M692.500 500V725" stroke="#7b5fd0" strokeOpacity=".4" strokeDasharray="18 5 4 5" />

        <g stroke={NAVY} strokeWidth="2">
          {dashes.map(([x, y]) => <path key={x} d={`M${x - 5} ${y}h10`} />)}
          <path d="M1270 732v10M699 718h10M704 709v9M1831 718h10M1836 709v9" />
        </g>
        <g stroke={NAVY} strokeWidth="1">
          {tangents.map(([x, y]) => <g key={x}><circle cx={x - 1} cy={y - 1} r="3" /><path d={`M${x - 1} ${y + 5}l6-6`} /></g>)}
        </g>

        <circle cx="692.500" cy="725.500" r="3" fill="#fff" stroke="#000" />
        <path d="M692 724V704" stroke="#f00" strokeWidth="3" />
        <path d="M692 695l5 11h-10z" fill="#f00" />
        <path d="M693 725.500h20" stroke="#0f0" strokeWidth="2" />
        <path d="M722 725.500l-10-4v8z" fill="#0f0" />
        <path d="M688 681l8 10M696 681l-8 10" stroke="#f01030" />
        <text x="730" y="729" fill="#0f0" fontSize="12" fontFamily="Liberation Sans">Y</text>

        {constrained.map(([x, y]) => <circle key={`${x}-${y}`} cx={x} cy={y} r="4" fill="#f00" stroke="#000" strokeWidth="1.500" />)}
        {free.map(([x, y]) => <circle key={`${x}-${y}`} cx={x} cy={y} r="3" fill="#fff" stroke="#000" strokeWidth="1.500" />)}

        <g fontFamily="Liberation Sans" fontSize="10">
          <text x="412" y="922" fill="#00f">Z</text>
          <text x="383" y="952" fill="#0f0">Y</text>
          <text x="419" y="952" fill={RED}>X</text>
        </g>
        <path d="M414 948V937" stroke="#8080ff" strokeWidth="2" />
        <path d="M414 929l3 9h-6z" fill="#00007f" />
        <path d="M413 949H402" stroke="#70f070" strokeWidth="2" />
        <path d="M393 949l9-3v6z" fill="#109020" />
        <circle cx="414" cy="949" r="3" fill="#fff" />
      </svg>
    </main>
  );
}

const zoomGlass = <><circle cx="7" cy="7" r="5.500" fill="#fff" stroke="#444" strokeWidth="1.400" /><path d="M11 11l5 5" stroke="#222" strokeWidth="2.600" /></>;

const viewTools: { label: string; menu?: boolean; icon: ReactNode }[] = [
  { label: 'Fit', icon: <>{zoomGlass}<path d="M5 4h3l1 1v5H5z" /></> },
  { label: 'Zoom window', menu: true, icon: <>{zoomGlass}<rect x="4.500" y="4.500" width="5" height="5" /></> },
  { label: 'Look at', menu: true, icon: <><path d="M1 6l3-3h9v9l-3 3H1z" fill="#ffe860" stroke="#111" strokeWidth="1.400" /><path d="M1 6h9v9M10 6l3-3" stroke="#111" /><path d="M13 8.500h5M15.500 6v5" stroke="#e00" strokeWidth="1.600" /></> },
  { label: 'Standard view', menu: true, icon: <><path d="M1 6l5-5h11v10l-5 6H1z" fill="#b9d6f3" stroke="#345a86" /><path d="M1 6h11v11H1z" fill="#3a75b5" /><path d="M12 6l5-5" stroke="#345a86" /></> },
  { label: 'Pan', menu: true, icon: <><path d="M0 8l4-3v6zM9 1l3 3H6zM6 13h5l-2 3z" fill="#222" stroke="none" /><circle cx="9" cy="8" r="3" fill="#3aa0e0" stroke="#246" /><rect x="10" y="9" width="6" height="7" fill="#fff" stroke="#222" /><path d="M12 12h3M12 14h3" /></> },
  { label: 'Perspective', icon: <><path d="M1 9L12 2h5l-4 10-3 4H1z" fill="#b9d6f3" stroke="#345a86" /><path d="M1 8h9v8H1z" fill="#3a75b5" stroke="#345a86" /><path d="M10 8l7-6v5l-7 9z" fill="#5f97d0" stroke="#345a86" /></> },
  { label: 'Visibility', menu: true, icon: <><circle cx="4" cy="12" r="3" strokeWidth="1.500" stroke="#24405e" /><circle cx="12" cy="12" r="3" strokeWidth="1.500" stroke="#24405e" /><path d="M1 11L6 2M14 10l3-7M7 12h2" stroke="#24405e" strokeWidth="1.500" /></> },
  { label: 'Render style', menu: true, icon: <><path d="M2 5l4-3h11v10l-4 4H2z" fill="#a9c4ea" stroke="#222" strokeWidth="2" /><path d="M2 5h11v11M13 5l4-3" stroke="#222" strokeWidth="2" /></> },
  { label: 'Assembly mode', menu: true, icon: <><path d="M1 9l4-3h11v6l-4 4H1z" fill="#2a7ee0" stroke="#012" strokeWidth="1.400" /><path d="M5 5l3-3h6v5l-3 2H5z" fill="#58a2f4" stroke="#012" strokeWidth="1.400" /><path d="M1 10h11v6M12 10l4-3" stroke="#012" /></> },
  { label: 'Back', icon: bentArrow },
  { label: 'Select', icon: cursor },
  { label: 'Box select', icon: <path d="M7 4v11l3-3 2 4 1-1-2-4h4z" fill="#fff" stroke="#999" /> },
];

function StatusBar() {
  return (
    <footer className="flex h-[25px] items-center justify-between border-b border-t border-b-[#2b2b2b] border-t-[#cfcfcf] bg-[#f0f0f0] pb-0.5 pl-0.5 text-[#444]">
      <p>Specify the curve to trim.</p>
      <div className="flex items-center">
        <span className="w-[155px]">X: -56.135 Y: 7.817 Z: 0.000</span>
        <span className="w-[92px]">Units: mm, deg</span>
        {viewTools.map((t) => (
          <button key={t.label} aria-label={t.label} className={clsx('flex items-center gap-1.5', t.menu ? 'w-[34px]' : 'w-[23px]')}>
            <Icon>{t.icon}</Icon>
            {t.menu && <Caret />}
          </button>
        ))}
        <Picker label="Status filter" value="Any" disabled className="h-[21px] w-[89px]" />
        <Picker label="Status configuration" value="Default" disabled className="ml-px h-[21px] w-[65px]" />
        <button aria-label="Structure" className="px-1"><Icon>{paleTree}</Icon></button>
      </div>
    </footer>
  );
}

export default function App() {
  return (
    <div className="flex h-screen flex-col overflow-hidden bg-[#e6e6e6] font-['Open_Sans','Noto_Sans',sans-serif] text-[11px] leading-4">
      <TitleBar />
      <Ribbon />
      <SelectionBar />
      <DocTabs />
      <div className="flex min-h-0 flex-1">
        <SideToolbar />
        <PropertiesPanel />
        <div className="w-1.5 border-r border-[#d2d2d2]" />
        <SketchCanvas />
      </div>
      <div className="flex h-8 flex-col items-start justify-between pl-[7px] pt-1.5 text-[#444]">
        <button className="flex items-center gap-[3px]">
          <Icon size={15}><path d="M1 2h12v14H1zM13 2l3 2v12h-3" stroke="#333" /><path d="M5 6v1M9 6v1M5 11v1M9 11v1" stroke="#333" strokeWidth="2" /></Icon>
          Catalog Browser
        </button>
        <span className="h-1.5 w-[104px] bg-[#d2d2d2]" />
      </div>
      <StatusBar />
    </div>
  );
}
